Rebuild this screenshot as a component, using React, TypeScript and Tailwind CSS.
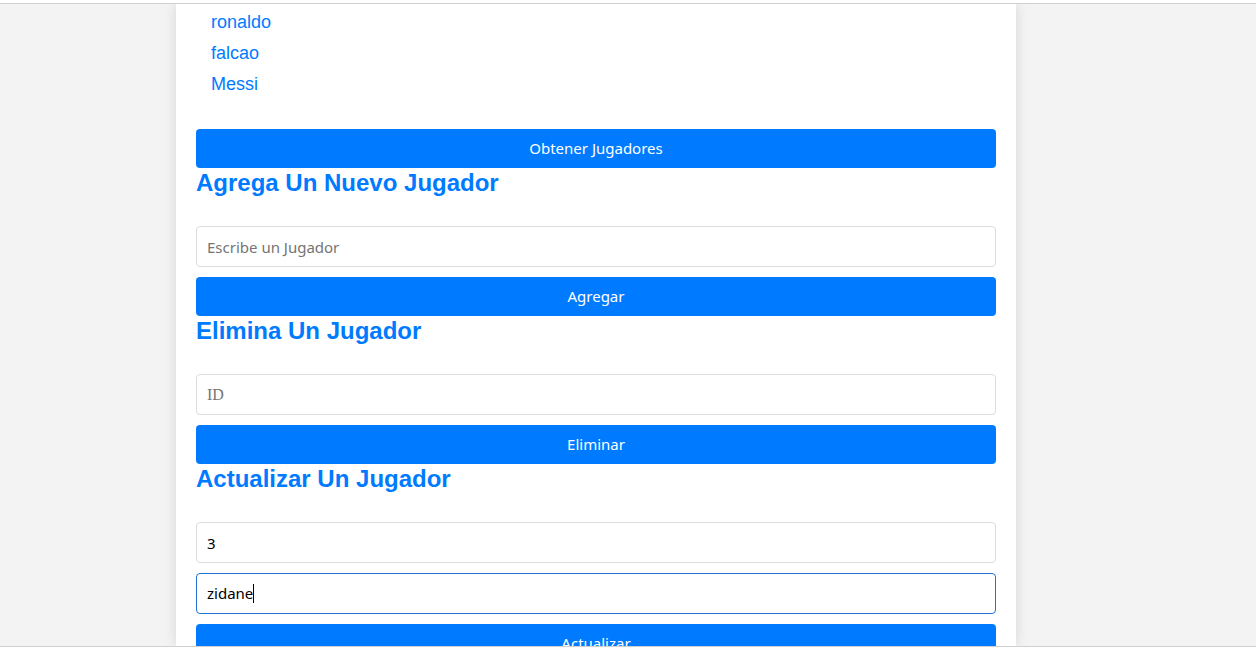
import React from "react"

const jugadores = ["ronaldo", "falcao", "Messi"]

const sans = { fontFamily: '"Noto Sans", "Open Sans", sans-serif' }

function Boton({ label }: { label: string }) {
	return (
		<button
			className="block w-full h-[39px] rounded-[4px] bg-[#007bff] text-white text-[15px] font-['Noto_Sans',sans-serif]"
		>
			{label}
		</button>
	)
}

function Titulo({ children }: { children: React.ReactNode }) {
	return (
		<h2 className="m-0 mb-[30px] h-[28px] leading-[30px] text-[24px] font-bold text-[#007bff] font-['Liberation_Sans',Arial,sans-serif]">
			{children}
		</h2>
	)
}

function Campo({
	placeholder,
	value,
	serif,
}: {
	placeholder?: string
	value?: string
	serif?: boolean
}) {
	return (
		<input
			readOnly
			placeholder={placeholder}
			defaultValue={value}
			className={
				"block w-full h-[41px] mb-[10px] px-[10px] rounded-[4px] border border-[#dcdcdc] bg-white text-black outline-none placeholder:text-[#757575] " +
				(serif
					? "text-[16px] font-['Liberation_Serif',serif]"
					: "text-[15px] font-['Noto_Sans',sans-serif]")
			}
		/>
	)
}

export default function App() {
	return (
		<div className="h-[648px] flex flex-col bg-white overflow-hidden">
			<div className="h-[3px] bg-white" />
			<div className="h-px bg-[#d0d0d4]" />
			<main className="flex-1 min-h-0 bg-[#f3f3f3] overflow-hidden">
				<div className="ml-[176px] w-[840px] h-full bg-white px-5 pt-[3px] shadow-[0_0_12px_rgba(0,0,0,0.12)]">
					{/* lista de jugadores */}
					<ul className="m-0 pl-[15px] list-none mb-[29px]">
						{jugadores.map((j) => (
							<li
								key={j}
								className="h-[31px] leading-[31px] text-[18px] text-[#007bff] font-['Liberation_Sans',Arial,sans-serif]"
							>
								{j}
							</li>
						))}
					</ul>
					<Boton label="Obtener Jugadores" />

					<Titulo>Agrega Un Nuevo Jugador</Titulo>
					<Campo placeholder="Escribe un Jugador" />
					<Boton label="Agregar" />

					<Titulo>Elimina Un Jugador</Titulo>
					<Campo placeholder="ID" serif />
					<Boton label="Eliminar" />

					<Titulo>Actualizar Un Jugador</Titulo>
					<Campo value="3" />
					<div
						className="flex items-center w-full h-[41px] mb-[10px] px-[10px] rounded-[4px] border border-[#1f74d4] bg-white text-[15px] text-black"
						style={sans}
					>
						zidane
						<span className="inline-block w-px h-[19px] bg-black" />
					</div>
					<Boton label="Actualizar" />
				</div>
			</main>
			<div className="h-px bg-[#d0d0d4]" />
			<div className="h-px bg-white" />
		</div>
	)
}
